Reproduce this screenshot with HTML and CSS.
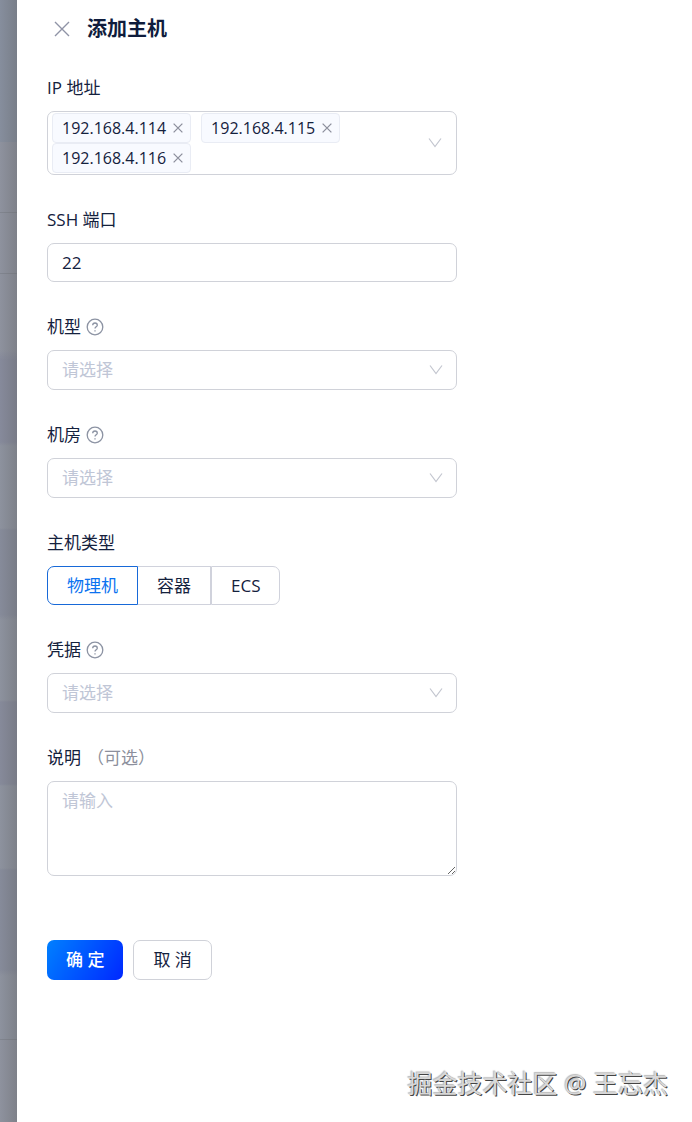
FILE: index.html
```
<!DOCTYPE html>
<html lang="zh-CN">
<head>
    <meta charset="UTF-8">
    <title>添加主机</title>
    <link rel="stylesheet" href="styles.css">
</head>
<body>
    <svg class="sprite" aria-hidden="true">
        <symbol id="close" viewBox="0 0 16 16"><path d="M1 1l14 14M15 1L1 15"/></symbol>
        <symbol id="down" viewBox="0 0 14 14"><path d="M1 2.5l6 8 6-8"/></symbol>
        <symbol id="help" viewBox="0 0 18 18">
            <circle cx="9" cy="9" r="7.8"/>
            <path d="M6.7 7.3C6.7 5.9 7.7 5 9 5s2.3.9 2.3 2.2c0 1.6-2.3 1.7-2.3 3.4M9 12.2v1.2"/>
        </symbol>
    </svg>
    <div class="mask"></div>
    <div class="drawer">
        <div class="header">
            <button class="close" type="button" aria-label="关闭"><svg><use href="#close"/></svg></button>
            <h1>添加主机</h1>
        </div>
        <form class="form">
            <div class="item">
                <label for="ip">IP 地址</label>
                <div class="tags">
                    <ul>
                        <li>192.168.4.114<button type="button" aria-label="删除"><svg><use href="#close"/></svg></button></li>
                        <li>192.168.4.115<button type="button" aria-label="删除"><svg><use href="#close"/></svg></button></li>
                        <li>192.168.4.116<button type="button" aria-label="删除"><svg><use href="#close"/></svg></button></li>
                        <li class="search"><input id="ip" type="text"></li>
                    </ul>
                    <svg class="arrow"><use href="#down"/></svg>
                </div>
            </div>
            <div class="item">
                <label for="port">SSH 端口</label>
                <input class="input" id="port" type="text" value="22">
            </div>
            <div class="item">
                <label for="model">机型<svg class="help"><use href="#help"/></svg></label>
                <div class="select">
                    <select id="model"><option>请选择</option></select>
                    <svg class="arrow"><use href="#down"/></svg>
                </div>
            </div>
            <div class="item">
                <label for="room">机房<svg class="help"><use href="#help"/></svg></label>
                <div class="select">
                    <select id="room"><option>请选择</option></select>
                    <svg class="arrow"><use href="#down"/></svg>
                </div>
            </div>
            <fieldset class="item">
                <legend>主机类型</legend>
                <div class="radios">
                    <label><input type="radio" name="type" checked><span>物理机</span></label>
                    <label><input type="radio" name="type"><span>容器</span></label>
                    <label><input type="radio" name="type"><span>ECS</span></label>
                </div>
            </fieldset>
            <div class="item">
                <label for="cert">凭据<svg class="help"><use href="#help"/></svg></label>
                <div class="select">
                    <select id="cert"><option>请选择</option></select>
                    <svg class="arrow"><use href="#down"/></svg>
                </div>
            </div>
            <div class="item">
                <label for="desc">说明<span class="optional">（可选）</span></label>
                <textarea class="input area" id="desc" placeholder="请输入"></textarea>
            </div>
            <div class="btns">
                <button class="btn primary" type="button">确 定</button>
                <button class="btn" type="button">取 消</button>
            </div>
        </form>
    </div>
    <div class="watermark">掘金技术社区 @ 王忘杰</div>
</body>
</html>
```
FILE: styles.css
```
*{
    margin: 0;
    padding: 0;
    box-sizing: border-box;
    list-style: none;
}
body{
    display: flex;
    min-height: 100vh;
    position: relative;
    font: 17px/24px "Open Sans", "Noto Sans CJK SC", sans-serif;
    color: #14213d;
    background: #fff;
}
button, input, select, textarea{
    font: inherit;
    color: inherit;
}
svg{
    fill: none;
    stroke: currentColor;
}
.sprite{
    position: absolute;
    width: 0;
    height: 0;
}
/* 左侧遮罩 */
.mask{
    flex: 0 0 17px;
    background:
        linear-gradient(90deg, transparent, rgba(90,90,90,0.3)),
        linear-gradient(#868e9d 0 142px, #8e929e 142px 212px, #81858f 212px 213px, #8e929e 213px 273px, #81858f 273px 274px, #8e929e 274px 350px, #868a9b 360px 442px, #8d929e 446px 528px, #868b9a 530px 615px, #8d929e 620px 700px, #868a9a 702px 784px, #8d929e 786px 868px, #868b9a 870px 970px, #8d929e 976px 1039px, #81858f 1039px 1040px, #8e929e 1040px);
}
.drawer{
    flex: 1;
    padding: 14px 30px;
}
.header{
    display: flex;
    align-items: center;
    gap: 17px;
    margin-bottom: 31px;
    padding-left: 7px;
}
.header h1{
    font-size: 20px;
    line-height: 30px;
    color: #0f1c3c;
}
.close{
    display: flex;
    border: 0;
    background: none;
    color: #8f93a6;
}
.close svg{
    width: 16px;
    height: 16px;
    stroke-width: 1.4;
}
.form{
    max-width: 410px;
}
.item{
    margin-bottom: 32px;
    border: 0;
}
.item > label, legend{
    display: flex;
    align-items: center;
    margin-bottom: 10px;
    line-height: 26px;
}
.help{
    width: 18px;
    height: 18px;
    margin-left: 5px;
    color: #8c93a3;
    stroke-width: 1.3;
}
.optional{
    margin-left: 6px;
    color: #8c8f9c;
}
.input, .tags, .select select{
    display: block;
    width: 100%;
    border: 1px solid #d0d2d9;
    border-radius: 7px;
    background: #fff;
}
.input{
    height: 39px;
    padding: 0 14px;
}
.area{
    height: 95px;
    padding: 7px 14px;
    resize: vertical;
}
.area::placeholder{
    color: #c0c6d6;
}
.tags, .select{
    position: relative;
}
.tags{
    padding: 1px 40px 1px 4px;
}
.tags ul{
    display: flex;
    flex-wrap: wrap;
    column-gap: 10px;
}
.tags li{
    display: flex;
    align-items: center;
    gap: 7px;
    height: 30px;
    padding: 0 7px 0 9px;
    border: 1px solid #e9ecf4;
    border-radius: 4px;
    background: #f8faff;
    font-size: 16px;
}
.tags li button{
    display: flex;
    border: 0;
    background: none;
    color: #8c8f9c;
}
.tags li svg{
    width: 10px;
    height: 10px;
    stroke-width: 2;
}
.tags .search{
    flex: 1;
    padding: 0;
    border: 0;
    background: none;
}
.search input{
    width: 100%;
    min-width: 0;
    border: 0;
    outline: 0;
    background: none;
}
.arrow{
    position: absolute;
    top: 0;
    bottom: 0;
    right: 14px;
    width: 14px;
    height: 14px;
    margin: auto 0;
    color: #c3c6cf;
    stroke-width: 1.2;
    pointer-events: none;
}
.select select{
    height: 40px;
    padding: 0 40px 0 14px;
    appearance: none;
    color: #c0c6d6;
}
.radios{
    display: flex;
}
.radios label{
    position: relative;
}
.radios input{
    position: absolute;
    width: 100%;
    height: 100%;
    opacity: 0;
}
.radios span{
    display: block;
    padding: 0 19px;
    border: 1px solid #d0d2dc;
    line-height: 37px;
}
.radios label:nth-child(2) span{
    border-left: 0;
}
.radios label:first-child span{
    border-radius: 7px 0 0 7px;
}
.radios label:last-child span{
    border-radius: 0 7px 7px 0;
}
.radios input:checked + span{
    border-color: #1769d8;
    color: #0b72f0;
}
.btns{
    display: flex;
    gap: 10px;
    margin-top: 64px;
}
.btn{
    height: 40px;
    padding: 0 19px;
    border: 1px solid #d0d2d9;
    border-radius: 7px;
    background: #fff;
}
.primary{
    border: 0;
    background: linear-gradient(120deg, #0080ff, #0028ff);
    color: #fff;
    font-weight: 500;
}
.watermark{
    position: absolute;
    right: 24px;
    bottom: 22px;
    font-size: 25px;
    line-height: 34px;
    color: #d8d8d8;
    text-shadow: 1px 1px 0 #444, -1px -1px 1px #bbb;
}
```
